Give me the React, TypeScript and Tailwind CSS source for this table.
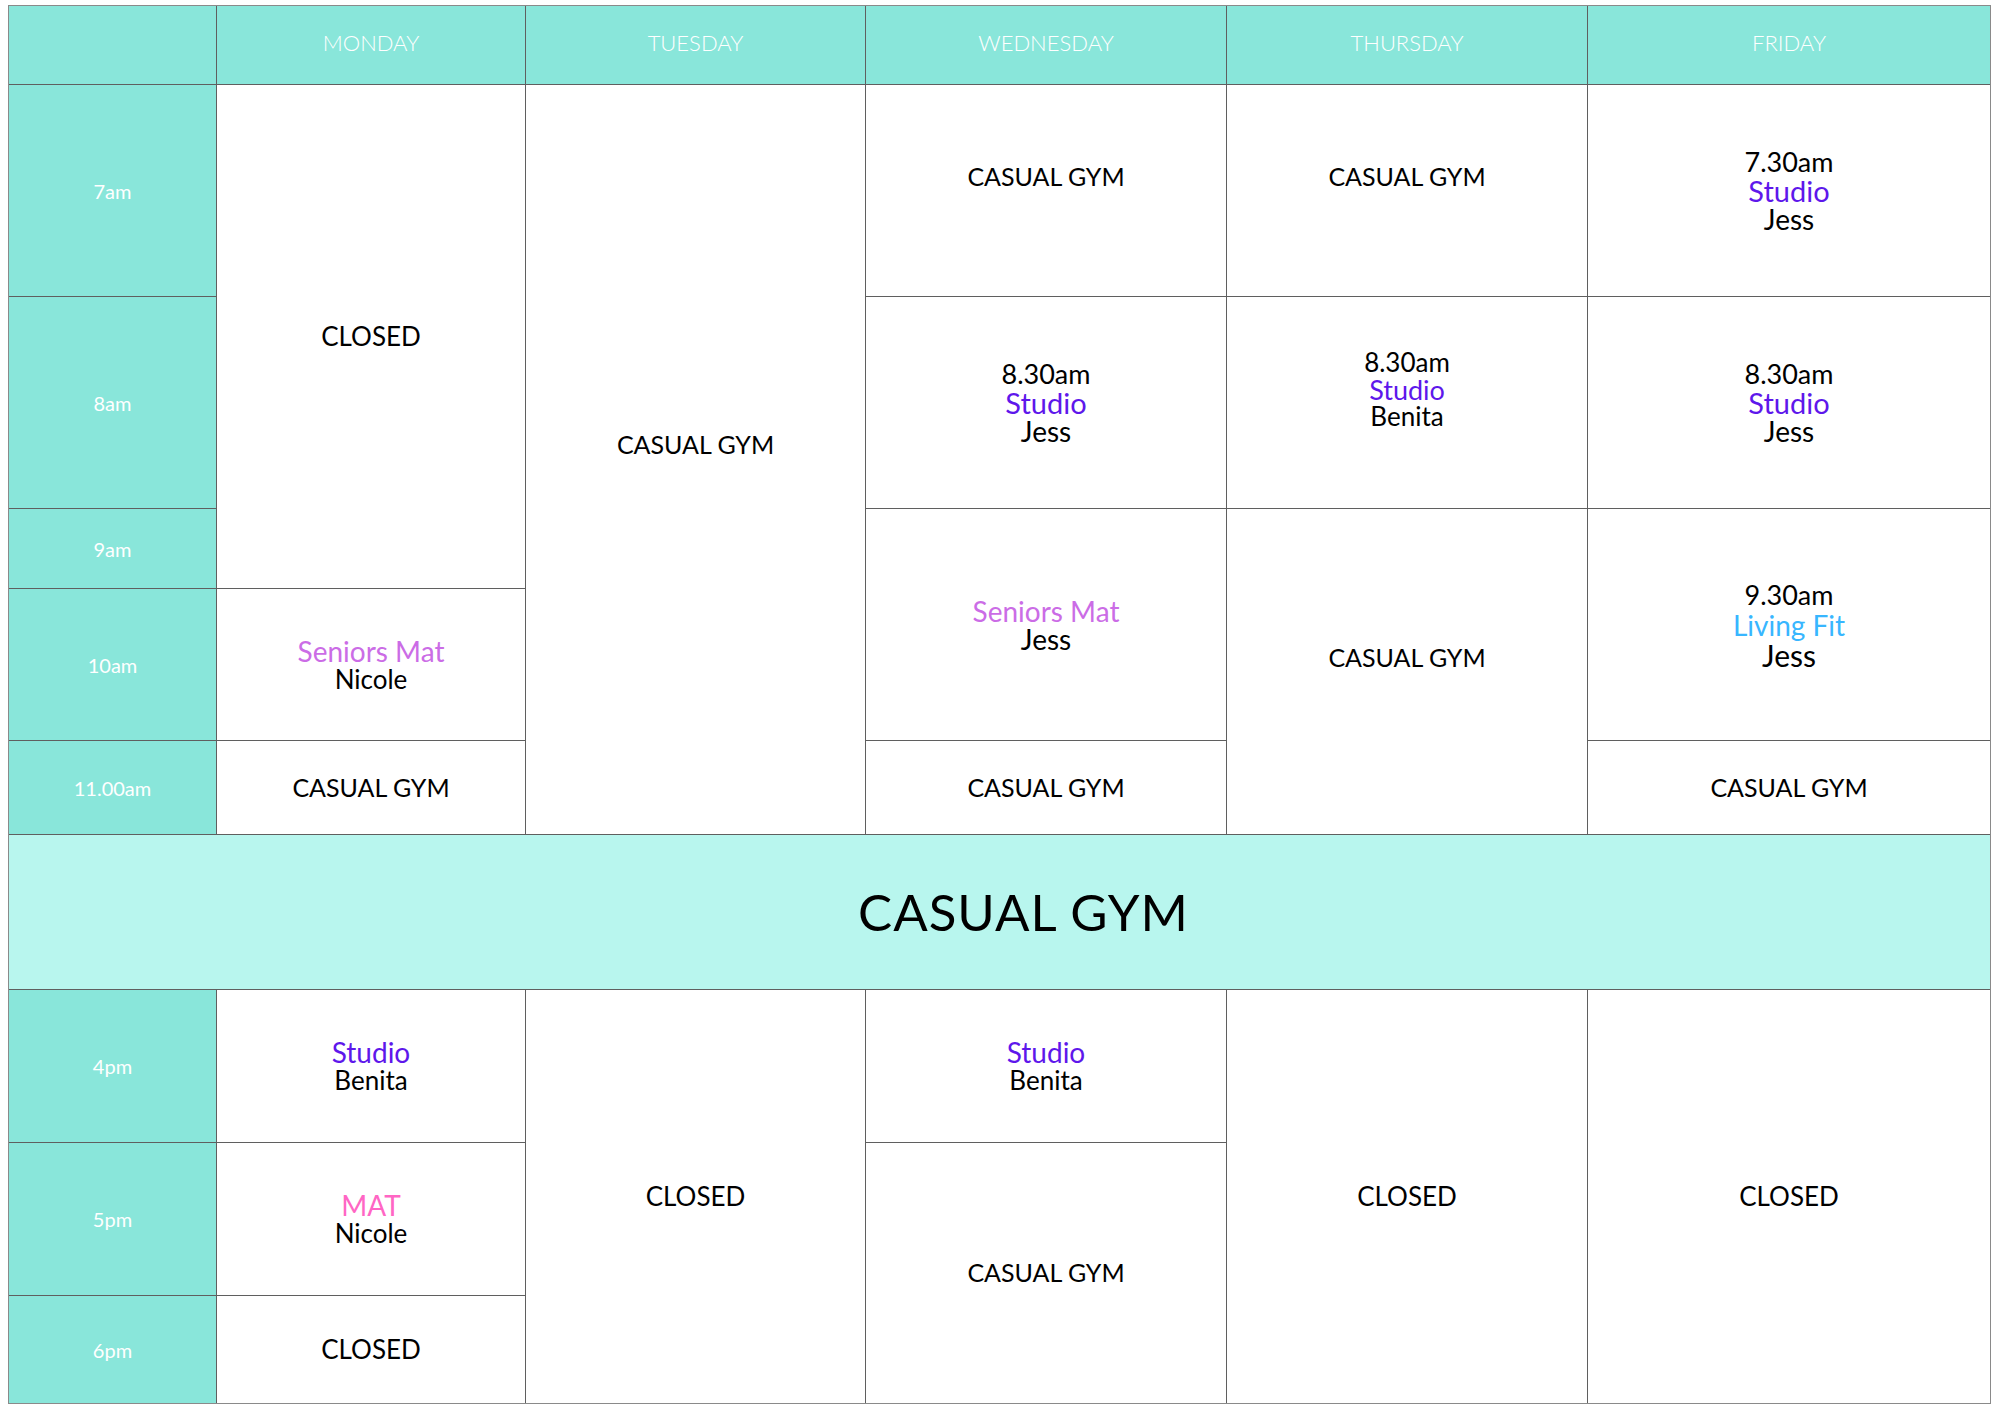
import React from "react";

const FONT = { fontFamily: "Lato, 'Open Sans', sans-serif" };

type Item = { t: string; c?: string; s?: string };

function Lines({ items, lh = "leading-[29px]" }: { items: Item[]; lh?: string }) {
  return (
    <div className="flex flex-col items-center">
      {items.map((it, i) => (
        <div key={i} className={`${it.s ?? "text-[26px]"} ${lh} ${it.c ?? "text-black"}`}>
          {it.t}
        </div>
      ))}
    </div>
  );
}

const STUDIO = "text-[#5e17eb]";
const SENIORS = "text-[#cb6ce6]";
const LIVING = "text-[#38b6ff]";
const MAT = "text-[#ff66c4]";

export default function App() {
  const cell = "bg-white flex items-center justify-center text-center";
  const head = "bg-[#89e6da] flex items-center justify-center pb-[6px] text-white text-[22px] font-light";
  const time = "bg-[#89e6da] flex items-center justify-center text-white text-[20px]";
  const casual = "text-[25px] text-black";
  const closed = "text-[26px] text-black";
  return (
    <div className="min-h-[1409px] w-[2000px] bg-white pt-[5px] pl-[8px]" style={FONT}>
      <div className="grid w-fit grid-cols-[207px_308px_339px_360px_360px_402px] grid-rows-[78px_211px_211px_79px_151px_93px_154px_152px_152px_107px] gap-px border border-[#8a8a8a] bg-[#5f5f5f]">
        {/* header */}
        <div className={`${head} col-start-1 row-start-1`}></div>
        <div className={`${head} col-start-2 row-start-1`}>MONDAY</div>
        <div className={`${head} col-start-3 row-start-1`}>TUESDAY</div>
        <div className={`${head} col-start-4 row-start-1`}>WEDNESDAY</div>
        <div className={`${head} col-start-5 row-start-1`}>THURSDAY</div>
        <div className={`${head} col-start-6 row-start-1`}>FRIDAY</div>

        {/* time column */}
        <div className={`${time} col-start-1 row-start-2`}>7am</div>
        <div className={`${time} col-start-1 row-start-3`}>8am</div>
        <div className={`${time} col-start-1 row-start-4`}>9am</div>
        <div className={`${time} col-start-1 row-start-5`}>10am</div>
        <div className={`${time} col-start-1 row-start-6`}>11.00am</div>
        <div className={`${time} col-start-1 row-start-8`}>4pm</div>
        <div className={`${time} col-start-1 row-start-9`}>5pm</div>
        <div className={`${time} col-start-1 row-start-10`}>6pm</div>

        {/* Monday */}
        <div className={`${cell} col-start-2 row-start-2 row-span-3`}>
          <span className={closed}>CLOSED</span>
        </div>
        <div className={`${cell} col-start-2 row-start-5`}>
          <Lines lh="leading-[28px]" items={[{ t: "Seniors Mat", c: SENIORS, s: "text-[28px]" }, { t: "Nicole" }]} />
        </div>
        <div className={`${cell} col-start-2 row-start-6`}>
          <span className={casual}>CASUAL GYM</span>
        </div>
        <div className={`${cell} col-start-2 row-start-8`}>
          <Lines lh="leading-[28px]" items={[{ t: "Studio", c: STUDIO, s: "text-[28px]" }, { t: "Benita" }]} />
        </div>
        <div className={`${cell} col-start-2 row-start-9`}>
          <Lines lh="leading-[28px]" items={[{ t: "MAT", c: MAT, s: "text-[28px]" }, { t: "Nicole" }]} />
        </div>
        <div className={`${cell} col-start-2 row-start-10`}>
          <span className={closed}>CLOSED</span>
        </div>

        {/* Tuesday */}
        <div className={`${cell} col-start-3 row-start-2 row-span-5 pb-[30px]`}>
          <span className={casual}>CASUAL GYM</span>
        </div>
        <div className={`${cell} col-start-3 row-start-8 row-span-3`}>
          <span className={closed}>CLOSED</span>
        </div>

        {/* Wednesday */}
        <div className={`${cell} col-start-4 row-start-2 pb-[28px]`}>
          <span className={casual}>CASUAL GYM</span>
        </div>
        <div className={`${cell} col-start-4 row-start-3`}>
          <Lines
            items={[
              { t: "8.30am", s: "text-[27px]" },
              { t: "Studio", c: STUDIO, s: "text-[29px]" },
              { t: "Jess", s: "text-[28px]" },
            ]}
          />
        </div>
        <div className={`${cell} col-start-4 row-start-4 row-span-2`}>
          <Lines
            lh="leading-[28px]"
            items={[{ t: "Seniors Mat", c: SENIORS, s: "text-[28px]" }, { t: "Jess", s: "text-[28px]" }]}
          />
        </div>
        <div className={`${cell} col-start-4 row-start-6`}>
          <span className={casual}>CASUAL GYM</span>
        </div>
        <div className={`${cell} col-start-4 row-start-8`}>
          <Lines lh="leading-[28px]" items={[{ t: "Studio", c: STUDIO, s: "text-[28px]" }, { t: "Benita" }]} />
        </div>
        <div className={`${cell} col-start-4 row-start-9 row-span-2`}>
          <span className={casual}>CASUAL GYM</span>
        </div>

        {/* Thursday */}
        <div className={`${cell} col-start-5 row-start-2 pb-[28px]`}>
          <span className={casual}>CASUAL GYM</span>
        </div>
        <div className={`${cell} col-start-5 row-start-3 pb-[26px]`}>
          <Lines
            lh="leading-[27px]"
            items={[
              { t: "8.30am", s: "text-[26px]" },
              { t: "Studio", c: STUDIO, s: "text-[27px]" },
              { t: "Benita", s: "text-[26px]" },
            ]}
          />
        </div>
        <div className={`${cell} col-start-5 row-start-4 row-span-3 pb-[28px]`}>
          <span className={casual}>CASUAL GYM</span>
        </div>
        <div className={`${cell} col-start-5 row-start-8 row-span-3`}>
          <span className={closed}>CLOSED</span>
        </div>

        {/* Friday */}
        <div className={`${cell} col-start-6 row-start-2`}>
          <Lines
            items={[
              { t: "7.30am", s: "text-[27px]" },
              { t: "Studio", c: STUDIO, s: "text-[29px]" },
              { t: "Jess", s: "text-[28px]" },
            ]}
          />
        </div>
        <div className={`${cell} col-start-6 row-start-3`}>
          <Lines
            items={[
              { t: "8.30am", s: "text-[27px]" },
              { t: "Studio", c: STUDIO, s: "text-[29px]" },
              { t: "Jess", s: "text-[28px]" },
            ]}
          />
        </div>
        <div className={`${cell} col-start-6 row-start-4 row-span-2`}>
          <Lines
            lh="leading-[30px]"
            items={[
              { t: "9.30am", s: "text-[27px]" },
              { t: "Living Fit", c: LIVING, s: "text-[28px]" },
              { t: "Jess", s: "text-[30px]" },
            ]}
          />
        </div>
        <div className={`${cell} col-start-6 row-start-6`}>
          <span className={casual}>CASUAL GYM</span>
        </div>
        <div className={`${cell} col-start-6 row-start-8 row-span-3`}>
          <span className={closed}>CLOSED</span>
        </div>

        {/* band */}
        <div className="col-span-6 col-start-1 row-start-7 flex items-center justify-center bg-[#b8f6ee] pl-[48px]">
          <span className="text-[51px] tracking-[1px] text-black">CASUAL GYM</span>
        </div>
      </div>
    </div>
  );
}
